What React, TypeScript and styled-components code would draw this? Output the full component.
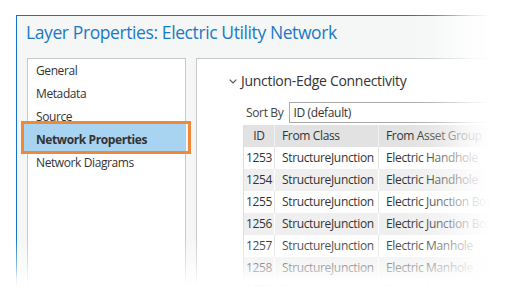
import React from "react";
import styled, { createGlobalStyle } from "styled-components";

const GlobalStyle = createGlobalStyle`
  html, body { margin: 0; padding: 0; background: #ffffff; overflow: hidden; }
  body { font-family: "Open Sans", "Noto Sans", sans-serif; color: #333333; }
  * { box-sizing: border-box; }
`;

const Stage = styled.div`
  position: relative;
  width: 505px;
  height: 307px;
  overflow: hidden;
  padding: 15px 0 0 16px;
  background: #ffffff;
`;

const Window = styled.div`
  width: 560px;
  height: 340px;
  border-top: 1px solid #1673c6;
  border-left: 1px solid #1673c6;
  background: #f5f7f7;
  display: flex;
  flex-direction: column;
`;

const Title = styled.h1`
  margin: 0;
  padding: 4px 0 0 9px;
  font-size: 17.5px;
  line-height: 24px;
  font-weight: 400;
  color: #1b79c6;
  letter-spacing: -0.4px;
  white-space: nowrap;
`;

const Body = styled.div`
  display: flex;
  gap: 10px;
  padding-left: 10px;
  margin-top: 14px;
  flex: 1;
`;

const NavPanel = styled.ul`
  list-style: none;
  margin: 0;
  padding: 0;
  width: 159px;
  flex: none;
  background: #ffffff;
  border: 1px solid #c9c9c9;
`;

const NavItem = styled.li<{ $selected?: boolean }>`
  position: relative;
  height: 23px;
  line-height: 23px;
  padding-left: 8px;
  font-size: 12px;
  letter-spacing: -0.4px;
  font-weight: ${(p) => (p.$selected ? 700 : 400)};
  color: #333333;
  white-space: nowrap;

  & > span {
    position: relative;
    z-index: 2;
  }

  ${(p) =>
    p.$selected &&
    `
    &::before {
      content: "";
      position: absolute;
      left: -4px;
      right: 0;
      top: -4px;
      bottom: -1px;
      background: #a8d4f1;
      z-index: 1;
    }
    &::after {
      content: "";
      position: absolute;
      left: -7px;
      right: -6px;
      top: -7px;
      bottom: -3px;
      border: 3px solid #f0883a;
      z-index: 3;
    }
  `}
`;

const ContentPanel = styled.div`
  flex: 1;
  background: #ffffff;
  border: 1px solid #c9c9c9;
  padding: 12px 0 0 32px;
`;

const SectionHeader = styled.div`
  display: flex;
  align-items: center;
  gap: 4px;
  height: 20px;
`;

const SectionTitle = styled.h2`
  margin: 0;
  font-size: 14px;
  line-height: 20px;
  font-weight: 400;
  letter-spacing: -0.3px;
  color: #333333;
  white-space: nowrap;
`;

const SectionBody = styled.div`
  margin-left: 14px;
  margin-top: 11px;
`;

const SortRow = styled.div`
  display: flex;
  align-items: center;
  height: 21px;
  padding-left: 3px;
  gap: 6px;
`;

const SortLabel = styled.span`
  font-size: 12px;
  letter-spacing: -0.35px;
  color: #444444;
  white-space: nowrap;
`;

const Dropdown = styled.div`
  flex: none;
  width: 260px;
  height: 21px;
  border: 1px solid #a9a9a9;
  background: #ffffff;
  font-size: 12px;
  letter-spacing: -0.35px;
  line-height: 19px;
  padding-left: 3px;
  color: #333333;
`;

const Table = styled.div`
  margin-top: 2px;
  width: 300px;
  border-left: 1px solid #dddddd;
`;

const Row = styled.div<{ $bg: string; $sep: string }>`
  display: grid;
  grid-template-columns: 31px 104px 1fr;
  height: 22px;
  background: ${(p) => p.$bg};
  & > div {
    border-right: 1px solid ${(p) => p.$sep};
  }
`;

const Cell = styled.div<{ $center?: boolean }>`
  font-size: 12px;
  letter-spacing: -0.35px;
  line-height: 22px;
  padding-left: ${(p) => (p.$center ? 0 : 7)}px;
  text-align: ${(p) => (p.$center ? "center" : "left")};
  color: #333333;
  white-space: nowrap;
  overflow: hidden;
`;

const RightFade = styled.div`
  position: absolute;
  top: 0;
  bottom: 0;
  left: 405px;
  width: 100px;
  pointer-events: none;
  background: linear-gradient(
    to right,
    rgba(255, 255, 255, 0) 0px,
    rgba(255, 255, 255, 0.15) 25px,
    rgba(255, 255, 255, 0.45) 45px,
    rgba(255, 255, 255, 0.8) 65px,
    rgba(255, 255, 255, 1) 85px
  );
`;

const BottomFade = styled.div`
  position: absolute;
  left: 0;
  right: 0;
  top: 238px;
  bottom: 0;
  pointer-events: none;
  background: linear-gradient(
    to bottom,
    rgba(255, 255, 255, 0) 0px,
    rgba(255, 255, 255, 0.5) 28px,
    rgba(255, 255, 255, 0.92) 42px,
    rgba(255, 255, 255, 1) 50px
  );
`;

const Chevron = () => (
  <svg width="8" height="5" viewBox="0 0 8 5" style={{ flex: "none" }}>
    <path d="M0.7 0.7 L4 4 L7.3 0.7" fill="none" stroke="#555" strokeWidth="1.2" />
  </svg>
);

const navItems = ["General", "Metadata", "Source", "Network Properties", "Network Diagrams"];

const rows = [
  ["1253", "StructureJunction", "Electric Handhole"],
  ["1254", "StructureJunction", "Electric Handhole"],
  ["1255", "StructureJunction", "Electric Junction Box"],
  ["1256", "StructureJunction", "Electric Junction Box"],
  ["1257", "StructureJunction", "Electric Manhole"],
  ["1258", "StructureJunction", "Electric Manhole"],
  ["1259", "StructureJunction", "Electric Manhole"],
];

export default function App() {
  return (
    <>
      <GlobalStyle />
      <Stage>
        <Window>
          <Title>Layer Properties: Electric Utility Network</Title>
          <Body>
            <NavPanel>
              {navItems.map((n) => (
                <NavItem key={n} $selected={n === "Network Properties"}>
                  <span>{n}</span>
                </NavItem>
              ))}
            </NavPanel>
            <ContentPanel>
              <SectionHeader>
                <Chevron />
                <SectionTitle>Junction-Edge Connectivity</SectionTitle>
              </SectionHeader>
              <SectionBody>
                <SortRow>
                  <SortLabel>Sort By</SortLabel>
                  <Dropdown>ID (default)</Dropdown>
                </SortRow>
                <Table>
                  <Row $bg="#e2e2e2" $sep="#f2f2f2">
                    <Cell $center>ID</Cell>
                    <Cell>From Class</Cell>
                    <Cell>From Asset Group</Cell>
                  </Row>
                  {rows.map((r, i) => (
                    <Row
                      key={r[0]}
                      $bg={i % 2 === 1 ? "#efefef" : "#ffffff"}
                      $sep={i % 2 === 1 ? "#ffffff" : "#e3e3e3"}
                    >
                      <Cell $center>{r[0]}</Cell>
                      <Cell>{r[1]}</Cell>
                      <Cell>{r[2]}</Cell>
                    </Row>
                  ))}
                </Table>
              </SectionBody>
            </ContentPanel>
          </Body>
        </Window>
        <RightFade />
        <BottomFade />
      </Stage>
    </>
  );
}
